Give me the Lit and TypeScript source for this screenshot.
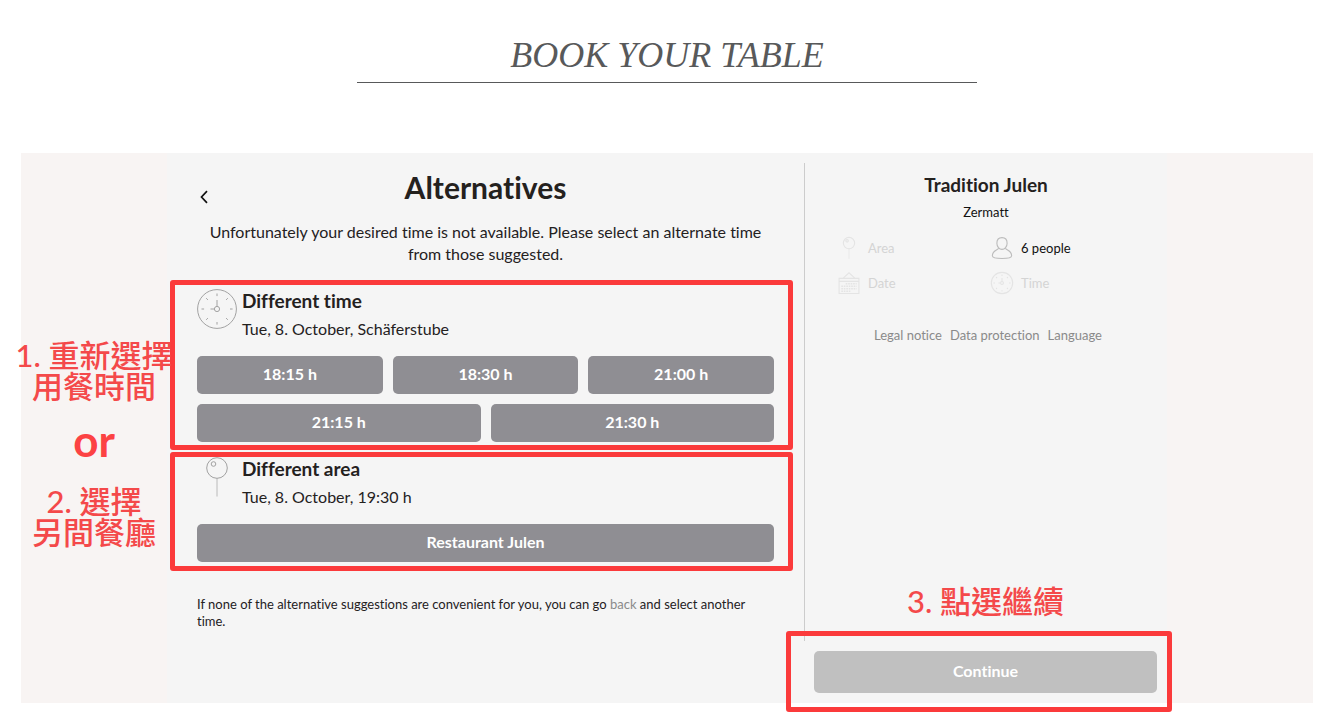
import { LitElement, html, css, svg } from "lit";
import { customElement, property } from "lit/decorators.js";

const clockIcon = svg`
  <circle cx="20" cy="20" r="19.4" />
  <circle cx="20" cy="20" r="2.6" />
  <path d="M20 17.4V11M17.4 20H13.5" />
  <path d="M20 4.5v2.6M20 33v2.6M4.5 20h2.6M33 20h2.6M9.2 9.2l1.7 1.7M29.1 29.1l1.7 1.7M30.8 9.2l-1.7 1.7M9.2 30.8l1.7-1.7" />`;

const pinIcon = svg`
  <circle cx="20" cy="11" r="10.3" />
  <circle cx="16.5" cy="7" r="2.3" />
  <path d="M20 21.3V39.5" opacity="0.7" />`;

const personIcon = svg`
  <path d="M20 1.2c5.8 0 9.3 4.3 9.3 10 0 6.5-4.3 11.3-9.3 11.3s-9.3-4.8-9.3-11.3c0-5.7 3.5-10 9.3-10z" />
  <path d="M14 20.5c-1.5 3-11.5 3.5-11.5 13.5 0 4 9 5 17.5 5s17.5-1 17.5-5c0-10-10-10.500-11.500-13.500" />`;

const calendarIcon = svg`
  <path d="M2 11.5h36v27.5H2zM2 17h36M9 11.5L20 1.5l11 10" />
  <path d="M14 21.5h20M6 26h28M6 30.5h28M6 35h18" stroke-dasharray="3 1.5" stroke-width="2.6" />`;

const icons = { clock: clockIcon, pin: pinIcon, person: personIcon, calendar: calendarIcon };
type IconName = keyof typeof icons;

@customElement("line-icon")
class LineIcon extends LitElement {
  @property() name: IconName = "clock";
  @property({ type: Number }) weight = 1;

  static styles = css`
    :host { display: block; flex: none; width: 40px; height: 40px; }
    svg { display: block; width: 100%; height: 100%; overflow: visible; }
  `;

  render() {
    return html`<svg viewBox="0 0 40 40" fill="none" stroke="currentColor" stroke-width=${this.weight} aria-hidden="true">${icons[this.name]}</svg>`;
  }
}

@customElement("app-root")
class AppRoot extends LitElement {
  static styles = css`
    :host {
      display: block;
      padding: 0 19px 21px 21px;
      background: #fff;
      color: #24211e;
      font: 16px/22px Lato, "Noto Sans CJK TC", sans-serif;
      font-variant-ligatures: none;
    }
    *, *::before { box-sizing: border-box; }
    h1, h2, h3, p { margin: 0; }
    button { font: inherit; border: 0; margin: 0; padding: 0; cursor: pointer; }
    a { color: #8a8a8a; text-decoration: none; }

    .title {
      width: 48%;
      margin: 0 auto 70px;
      padding: 34px 0 6px;
      border-bottom: 1px solid #58595a;
      color: #58595a;
      font: italic 36px/42px "Liberation Serif", serif;
      text-align: center;
      text-transform: uppercase;
    }
    .panel { position: relative; background: #f8f4f3; }
    .booking {
      display: grid;
      grid-template-columns: 637fr 363fr;
      max-width: 1000px;
      min-height: 550px;
      margin: 0 auto;
      background: #f5f5f5;
    }

    .main { padding: 17px 30px 40px; }
    .head { display: grid; grid-template-columns: 14px 1fr 14px; }
    .head h2 { font-size: 30px; line-height: 34px; font-weight: 700; text-align: center; }
    .back { display: grid; place-items: center; background: none; color: #111; height: 20px; margin-top: 17px; }
    .lead { margin: 14px 0 22px; text-align: center; }

    .option { position: relative; margin-bottom: 13px; }
    .info { display: grid; grid-template-columns: 40px 1fr; column-gap: 5px; margin-bottom: 13px; line-height: 28px; }
    .info line-icon { margin-top: 2px; color: #a2a2a2; }
    .info h3 { font-size: 19px; font-weight: 700; }
    .choices { display: grid; grid-template-columns: repeat(6, 1fr); gap: 10px; }
    .choice { height: 38px; padding-bottom: 2px; border-radius: 5px; background: #8f8e93; color: #fff; font-weight: 700; }
    .third { grid-column: span 2; }
    .half { grid-column: span 3; }
    .full { grid-column: span 6; }
    .foot { margin-top: 34px; font-size: 13px; line-height: 17px; }

    .side { display: flex; flex-direction: column; padding-top: 10px; font-size: 13px; }
    .summary { flex: 1; border-left: 1px solid #ccc; padding: 9px 28px; text-align: center; }
    .summary h2 { font-size: 19px; line-height: 26px; }
    .place { line-height: 28px; color: #111; }
    .facts { display: grid; grid-template-columns: 1fr 1fr; margin: 4px 0 24px; }
    .fact { display: flex; align-items: center; gap: 8px; height: 35px; padding-left: 5px; color: #111; }
    .fact line-icon { width: 22px; height: 22px; color: #bcbcbc; }
    .fact.empty { color: #d4d4d4; }
    .fact.empty line-icon { color: #e4e4e4; }
    .links { display: flex; justify-content: center; gap: 8px; padding-left: 4px; white-space: nowrap; }
    .submit { position: relative; padding: 10px; }
    .continue { width: 100%; height: 42px; padding-bottom: 2px; border-radius: 5px; background: #c0c0c0; color: #fff; font-size: 16px; font-weight: 700; }

    .frame { position: absolute; border: 5px solid #fb3a3b; border-radius: 3px; pointer-events: none; }
    .frame.time { inset: -7px -19px -8px -27px; }
    .frame.area { inset: -3px -19px -9px -27px; }
    .frame.send { inset: -10px -5px -9px -18px; }
    .note {
      color: #f4494a;
      font-size: 31px;
      line-height: 31px;
      font-weight: 500;
      white-space: nowrap;
      text-align: center;
    }
    .steps { position: absolute; top: 187px; left: -4px; width: 154px; display: grid; gap: 16px; justify-content: center; }
    .or { padding-bottom: 8px; font-size: 44px; line-height: 44px; font-weight: 700; color: #fc4243; }
    .last { position: absolute; left: 0; right: 0; bottom: 100%; padding-bottom: 24px; }
  `;

  times = [
    { label: "18:15 h", span: "third" },
    { label: "18:30 h", span: "third" },
    { label: "21:00 h", span: "third" },
    { label: "21:15 h", span: "half" },
    { label: "21:30 h", span: "half" },
  ];

  facts: { icon: IconName; label: string; empty: boolean }[] = [
    { icon: "pin", label: "Area", empty: true },
    { icon: "person", label: "6 people", empty: false },
    { icon: "calendar", label: "Date", empty: true },
    { icon: "clock", label: "Time", empty: true },
  ];

  option(icon: IconName, title: string, detail: string, frame: string, choices: { label: string; span: string }[]) {
    return html`
      <section class="option">
        <div class="info">
          <line-icon name=${icon}></line-icon>
          <div>
            <h3>${title}</h3>
            <p>${detail}</p>
          </div>
        </div>
        <div class="choices">
          ${choices.map((c) => html`<button class="choice ${c.span}">${c.label}</button>`)}
        </div>
        <span class="frame ${frame}"></span>
      </section>`;
  }

  render() {
    return html`
      <h1 class="title">Book your table</h1>
      <div class="panel">
        <div class="booking">
          <main class="main">
            <div class="head">
              <button class="back" aria-label="Back">
                <svg width="8" height="14" viewBox="0 0 8 14" fill="none" stroke="currentColor" stroke-width="1.7"><path d="M7 1.2L1.5 7L7 12.8" /></svg>
              </button>
              <h2>Alternatives</h2>
            </div>
            <p class="lead">Unfortunately your desired time is not available. Please select an alternate time from those suggested.</p>
            ${this.option("clock", "Different time", "Tue, 8. October, Schäferstube", "time", this.times)}
            ${this.option("pin", "Different area", "Tue, 8. October, 19:30 h", "area", [{ label: "Restaurant Julen", span: "full" }])}
            <p class="foot">If none of the alternative suggestions are convenient for you, you can go <a href="#">back</a> and select another time.</p>
          </main>
          <aside class="side">
            <div class="summary">
              <h2>Tradition Julen</h2>
              <p class="place">Zermatt</p>
              <div class="facts">
                ${this.facts.map((f) => html`
                  <div class="fact ${f.empty ? "empty" : ""}">
                    <line-icon name=${f.icon} weight="2"></line-icon><span>${f.label}</span>
                  </div>`)}
              </div>
              <nav class="links">
                <a href="#">Legal notice</a><a href="#">Data protection</a><a href="#">Language</a>
              </nav>
            </div>
            <div class="submit">
              <p class="note last">3. 點選繼續</p>
              <button class="continue">Continue</button>
              <span class="frame send"></span>
            </div>
          </aside>
        </div>
        <div class="note steps">
          <p>1. 重新選擇<br />用餐時間</p>
          <p class="or">or</p>
          <p>2. 選擇<br />另間餐廳</p>
        </div>
      </div>`;
  }
}
